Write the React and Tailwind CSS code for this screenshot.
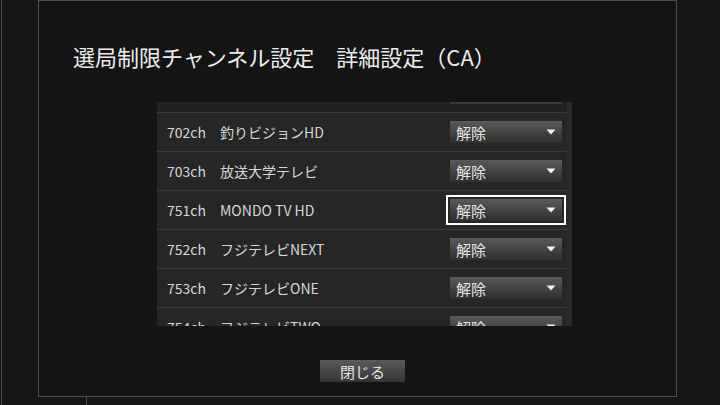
import React from 'react';

const rows = [
    { ch: '702ch', name: '釣りビジョンHD' },
    { ch: '703ch', name: '放送大学テレビ' },
    { ch: '751ch', name: 'MONDO TV HD', focused: true },
    { ch: '752ch', name: 'フジテレビNEXT' },
    { ch: '753ch', name: 'フジテレビONE' },
    { ch: '754ch', name: 'フジテレビTWO' },
];

const font = { fontFamily: '"Noto Sans CJK JP", "Noto Sans", sans-serif' };

const Caret = () => (
    <svg width="10" height="6" viewBox="0 0 10 6" className="shrink-0">
        <path d="M0.5 0.5 L9.5 0.5 L5 5.5 Z" fill="#f2f2f2" />
    </svg>
);

const Select = ({ value, focused }) => (
    <div className={focused ? 'outline-2 outline-offset-2 outline-white' : ''}>
        <div className="w-[112px] h-[22px] pl-[6px] pr-[6px] flex items-center justify-between bg-linear-to-b from-[#5a5a5a] to-[#2f2f2f] text-[15px] leading-none text-[#e4e4e4]">
            <span>{value}</span>
            <Caret />
        </div>
    </div>
);

const Row = ({ ch, name, focused }) => (
    <div className="h-[39px] shrink-0 flex items-center border-b border-[#3a3a3a] pl-[10px] pr-[5px] text-[14px] text-[#d6d6d6]">
        <span className="w-[53px]">{ch}</span>
        <span>{name}</span>
        <div className="ml-auto">
            <Select value="解除" focused={focused} />
        </div>
    </div>
);

export default function App() {
    return (
        <div className="w-[720px] h-[405px] bg-[#161616] flex overflow-hidden" style={font}>
            <div className="ml-[1px] border-l border-[#4c4c4c] h-full" />
            <div className="ml-[36px] flex flex-col">
                {/* Dialog */}
                <div className="w-[639px] h-[397px] border border-[#4e4e4e] bg-[#141414] flex flex-col">
                    <h1 className="ml-[34px] mt-[40px] text-[22px] leading-[30px] font-normal text-[#ececec] whitespace-pre">
                        選局制限チャンネル設定　詳細設定（CA）
                    </h1>

                    {/* Channel list, scrolled part way */}
                    <div className="ml-[118px] mt-[31px] w-[415px] h-[224px] bg-[#262626] overflow-hidden flex flex-col border-r-[5px] border-[#2b2b2b]">
                        <div className="h-[11px] shrink-0 flex justify-end items-start pr-[5px] border-b border-[#3a3a3a] bg-[#222222]">
                            <div className="w-[112px] h-[2px] bg-[#3a3a3a]" />
                        </div>
                        {rows.map((r) => (
                            <Row key={r.ch} {...r} />
                        ))}
                    </div>

                    <button className="ml-[281px] mt-[34px] w-[85px] h-[22px] bg-linear-to-b from-[#5a5a5a] to-[#353535] text-[15px] leading-none text-[#e4e4e4]">
                        閉じる
                    </button>
                </div>
                <div className="ml-[48px] w-px h-[8px] bg-[#4e4e4e]" />
            </div>
        </div>
    );
}
